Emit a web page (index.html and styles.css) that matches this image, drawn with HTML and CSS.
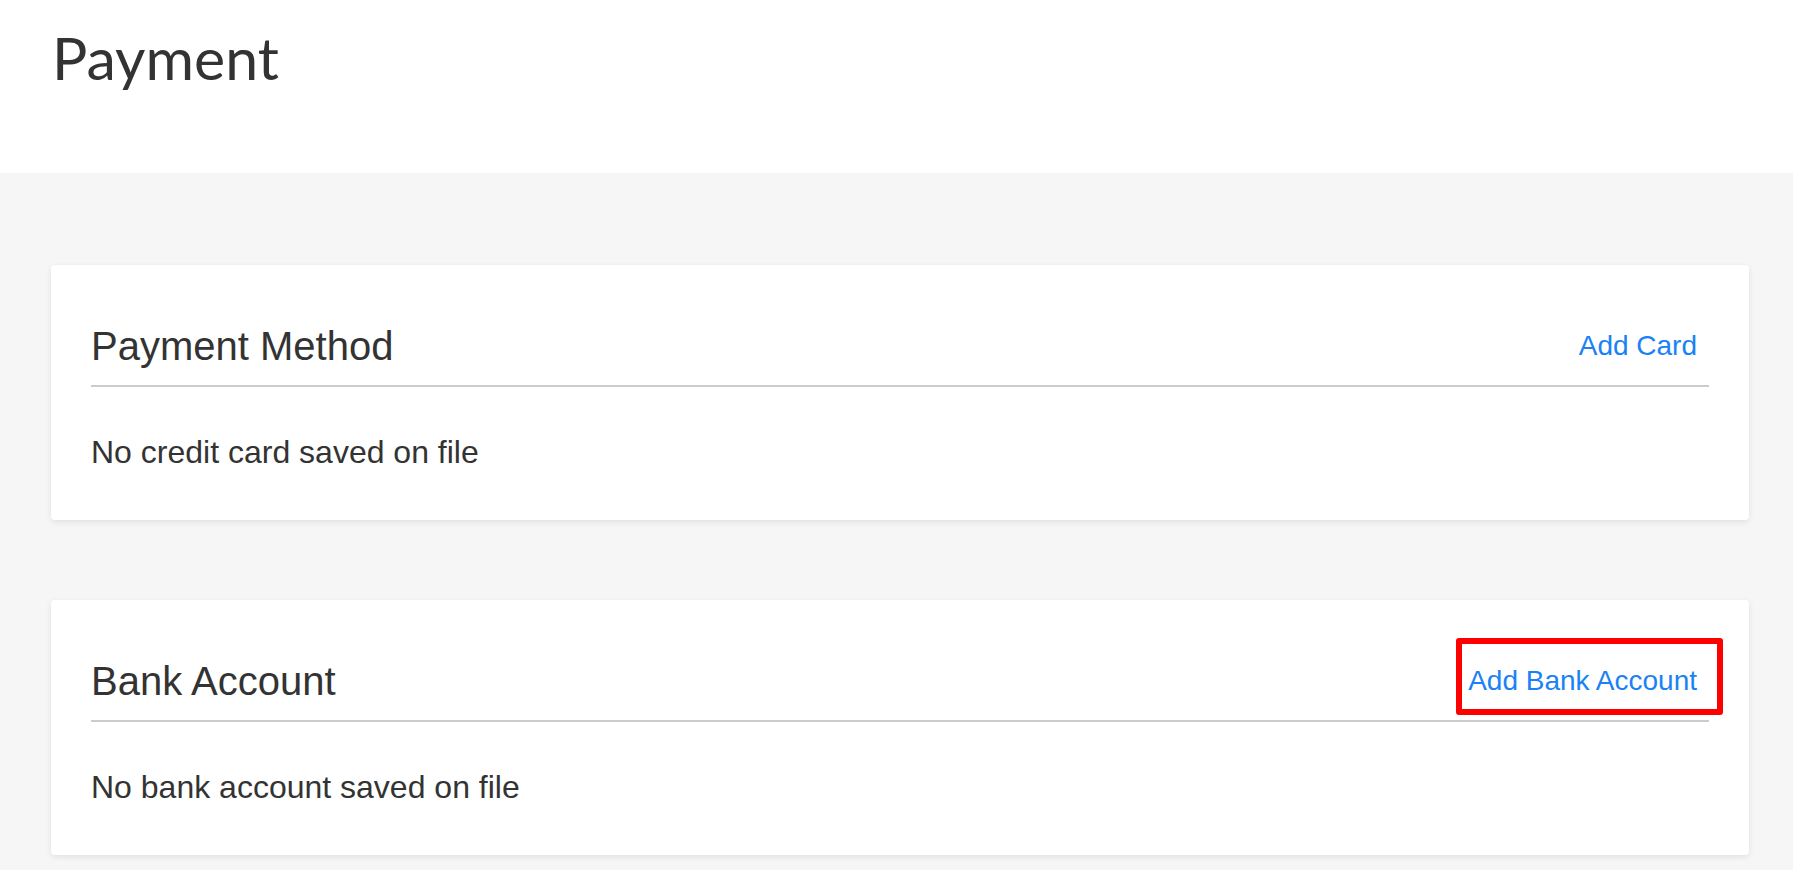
FILE: index.html
```html
<!DOCTYPE html>
<html lang="en">
<head>
<meta charset="utf-8">
<title>Payment</title>
<link rel="stylesheet" href="styles.css">
</head>
<body>
  <header class="page-header">
    <h1 class="page-title">Payment</h1>
  </header>
  <main class="page-body">
    <section class="card">
      <div class="card-head">
        <h2 class="card-title">Payment Method</h2>
        <a class="card-link" href="#">Add Card</a>
      </div>
      <p class="card-text">No credit card saved on file</p>
    </section>
    <section class="card">
      <div class="card-head">
        <h2 class="card-title">Bank Account</h2>
        <a class="card-link highlighted" href="#">Add Bank Account</a>
      </div>
      <p class="card-text">No bank account saved on file</p>
    </section>
  </main>
</body>
</html>
```
FILE: styles.css
```css
* { box-sizing: border-box; }

html, body {
  margin: 0;
  padding: 0;
  height: 100%;
}

body {
  background: #f6f6f6;
  color: #333333;
  font-family: "Liberation Sans", Arial, sans-serif;
  overflow: hidden;
}

.page-header {
  background: #ffffff;
  height: 173px;
  padding: 22px 48px 0 52px;
}

.page-title {
  margin: 0;
  font-family: Lato, "Open Sans", sans-serif;
  font-weight: 400;
  font-size: 59px;
  line-height: 71px;
  color: #333333;
}

.page-body {
  display: flex;
  flex-direction: column;
  gap: 80px;
  padding: 92px 44px 0 51px;
}

.card {
  background: #ffffff;
  border-radius: 4px;
  box-shadow: 0 2px 6px rgba(0, 0, 0, 0.09);
  padding: 58px 40px 49px 40px;
}

.card-head {
  display: flex;
  align-items: center;
  justify-content: space-between;
  padding-bottom: 16px;
  border-bottom: 2px solid #cccccc;
}

.card-title {
  margin: 0;
  font-weight: 400;
  font-size: 40px;
  line-height: 46px;
  color: #333333;
}

.card-link {
  position: relative;
  margin-right: 12px;
  font-size: 28px;
  line-height: 32px;
  color: #1a82f5;
  text-decoration: none;
}

.card-link.highlighted::after {
  content: "";
  position: absolute;
  left: -12px;
  right: -26px;
  top: -27px;
  bottom: -18px;
  border: 6px solid #ff0000;
  border-radius: 3px;
  pointer-events: none;
}

.card-text {
  margin: 47px 0 0 0;
  font-size: 32px;
  line-height: 37px;
  color: #333333;
}
```
